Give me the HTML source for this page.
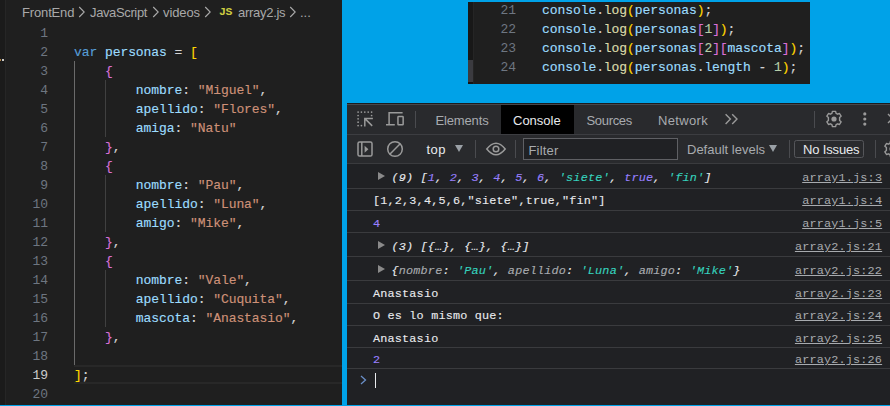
<!DOCTYPE html><html><head><meta charset="utf-8"><style>
*{margin:0;padding:0;box-sizing:border-box}
html,body{width:890px;height:406px;overflow:hidden;background:#00a2e8}
body{position:relative}
.a{position:absolute}
.mono{font-family:"Liberation Mono",monospace}
.sans{font-family:"Liberation Sans",sans-serif}
#ed{left:0;top:0;width:342px;height:405px;background:#1f1f1f;overflow:hidden}
.ln{position:absolute;left:0;width:48px;text-align:right;color:#6e7681;font-size:13px;line-height:19px;height:19px;white-space:pre}
.cl{position:absolute;-webkit-text-stroke:0.15px currentColor;font-size:13px;line-height:19px;height:19px;letter-spacing:-0.07px;white-space:pre;color:#d4d4d4}
.k{color:#569cd6}.v{color:#9cdcfe}.s{color:#ce9178}.b1{color:#ffd700}.b2{color:#da70d6}.b3{color:#179fff}.f{color:#dcdcaa}.n{color:#b5cea8}
.bc{position:absolute;font-size:13px;color:#a9a9a9;white-space:pre;line-height:16px}
#snip{left:468px;top:2px;width:342px;height:82px;background:#1f1f1f;overflow:hidden}
#dt{left:347px;top:103px;width:543px;height:302px;background:#202124;overflow:hidden}
.hl{position:absolute;left:0;width:543px;height:1px;background:#3a3b3e}
.ct{position:absolute;-webkit-text-stroke:0.12px currentColor;font-size:11.8px;letter-spacing:0.19px;line-height:14px;white-space:pre;color:#e8eaed}
.lnk{position:absolute;font-size:11.8px;letter-spacing:0.19px;line-height:14px;white-space:pre;color:#a8abaf;text-decoration:underline}
.num{color:#9980ff}.str{color:#36d3be}.prop{color:#a8abaf}
.tri{position:absolute;width:0;height:0;border-left:7px solid #8a8a8a;border-top:4.5px solid transparent;border-bottom:4.5px solid transparent}
.ui{position:absolute;font-size:13px;line-height:16px;white-space:pre;color:#a8abaf}
.sep{position:absolute;width:1px;background:#4a4b4f}
</style></head><body>
<div id="ed" class="a">
<div class="a" style="left:0;top:0;width:5px;height:405px;background:#1b1b1b"></div>
<div class="a" style="left:0;top:59px;width:1px;height:2px;background:#b08040"></div>
<div class="a" style="left:2px;top:59px;width:2px;height:2px;background:#c8c8c8"></div>
<div class="a" style="left:5px;top:0;width:1px;height:405px;background:#262626"></div>
<div class="bc sans" style="left:22px;top:4.6px;letter-spacing:-0.15px">FrontEnd</div>
<div class="bc sans" style="left:90px;top:4.6px;letter-spacing:-0.37px">JavaScript</div>
<div class="bc sans" style="left:163px;top:4.6px;letter-spacing:-0.1px">videos</div>
<div class="bc sans" style="left:238px;top:4.6px;letter-spacing:-0.28px">array2.js</div>
<div class="bc sans" style="left:300px;top:4.6px">...</div>
<svg class="a" style="left:78px;top:6px" width="8" height="12" viewBox="0 0 8 12"><path d="M1.2 1 L6.2 6 L1.2 11" fill="none" stroke="#a9a9a9" stroke-width="1.1"/></svg>
<svg class="a" style="left:152.3px;top:6px" width="8" height="12" viewBox="0 0 8 12"><path d="M1.2 1 L6.2 6 L1.2 11" fill="none" stroke="#a9a9a9" stroke-width="1.1"/></svg>
<svg class="a" style="left:204px;top:6px" width="8" height="12" viewBox="0 0 8 12"><path d="M1.2 1 L6.2 6 L1.2 11" fill="none" stroke="#a9a9a9" stroke-width="1.1"/></svg>
<svg class="a" style="left:289px;top:6px" width="8" height="12" viewBox="0 0 8 12"><path d="M1.2 1 L6.2 6 L1.2 11" fill="none" stroke="#a9a9a9" stroke-width="1.1"/></svg>
<div class="a mono" style="left:219px;top:5px;font-size:11.5px;font-weight:bold;color:#cbcb41;line-height:14px;letter-spacing:-0.5px">JS</div>
<div class="a" style="left:74px;top:365.4px;width:270px;height:19px;border-top:2px solid #282828;border-bottom:2px solid #282828"></div>
<div class="a" style="left:74px;top:61.4px;width:1px;height:304.0px;background:#6a6a6a"></div>
<div class="a" style="left:105px;top:80.4px;width:1px;height:57.0px;background:#404040"></div>
<div class="a" style="left:105px;top:175.4px;width:1px;height:57.0px;background:#404040"></div>
<div class="a" style="left:105px;top:270.4px;width:1px;height:57.0px;background:#404040"></div>
<div class="ln mono" style="top:24.3px;color:#6e7681">1</div>
<div class="ln mono" style="top:43.3px;color:#6e7681">2</div>
<div class="cl mono" style="left:74px;top:43.2px"><span class="k">var</span> <span class="v">personas</span> = <span class="b1">[</span></div>
<div class="ln mono" style="top:62.3px;color:#6e7681">3</div>
<div class="cl mono" style="left:74px;top:62.2px">    <span class="b2">{</span></div>
<div class="ln mono" style="top:81.3px;color:#6e7681">4</div>
<div class="cl mono" style="left:74px;top:81.2px">        <span class="v">nombre</span>: <span class="s">"Miguel"</span>,</div>
<div class="ln mono" style="top:100.3px;color:#6e7681">5</div>
<div class="cl mono" style="left:74px;top:100.2px">        <span class="v">apellido</span>: <span class="s">"Flores"</span>,</div>
<div class="ln mono" style="top:119.3px;color:#6e7681">6</div>
<div class="cl mono" style="left:74px;top:119.2px">        <span class="v">amiga</span>: <span class="s">"Natu"</span></div>
<div class="ln mono" style="top:138.3px;color:#6e7681">7</div>
<div class="cl mono" style="left:74px;top:138.2px">    <span class="b2">}</span>,</div>
<div class="ln mono" style="top:157.3px;color:#6e7681">8</div>
<div class="cl mono" style="left:74px;top:157.2px">    <span class="b2">{</span></div>
<div class="ln mono" style="top:176.3px;color:#6e7681">9</div>
<div class="cl mono" style="left:74px;top:176.2px">        <span class="v">nombre</span>: <span class="s">"Pau"</span>,</div>
<div class="ln mono" style="top:195.3px;color:#6e7681">10</div>
<div class="cl mono" style="left:74px;top:195.2px">        <span class="v">apellido</span>: <span class="s">"Luna"</span>,</div>
<div class="ln mono" style="top:214.3px;color:#6e7681">11</div>
<div class="cl mono" style="left:74px;top:214.2px">        <span class="v">amigo</span>: <span class="s">"Mike"</span>,</div>
<div class="ln mono" style="top:233.3px;color:#6e7681">12</div>
<div class="cl mono" style="left:74px;top:233.2px">    <span class="b2">}</span>,</div>
<div class="ln mono" style="top:252.3px;color:#6e7681">13</div>
<div class="cl mono" style="left:74px;top:252.2px">    <span class="b2">{</span></div>
<div class="ln mono" style="top:271.3px;color:#6e7681">14</div>
<div class="cl mono" style="left:74px;top:271.2px">        <span class="v">nombre</span>: <span class="s">"Vale"</span>,</div>
<div class="ln mono" style="top:290.3px;color:#6e7681">15</div>
<div class="cl mono" style="left:74px;top:290.2px">        <span class="v">apellido</span>: <span class="s">"Cuquita"</span>,</div>
<div class="ln mono" style="top:309.3px;color:#6e7681">16</div>
<div class="cl mono" style="left:74px;top:309.2px">        <span class="v">mascota</span>: <span class="s">"Anastasio"</span>,</div>
<div class="ln mono" style="top:328.3px;color:#6e7681">17</div>
<div class="cl mono" style="left:74px;top:328.2px">    <span class="b2">}</span>,</div>
<div class="ln mono" style="top:347.3px;color:#6e7681">18</div>
<div class="ln mono" style="top:366.3px;color:#cccccc">19</div>
<div class="cl mono" style="left:74px;top:366.2px"><span class="b1">]</span>;</div>
<div class="ln mono" style="top:385.3px;color:#6e7681">20</div>
</div>
<div id="snip" class="a">
<div class="a" style="left:0;top:0;width:5px;height:82px;background:#181818"></div>
<div class="a" style="left:0;top:58px;width:5px;height:22px;background:#3b3b40"></div>
<div class="a" style="left:0;top:80px;width:5px;height:2px;background:#141414"></div>
<div class="a" style="left:5px;top:0;width:1px;height:82px;background:#252525"></div>
<div class="ln mono" style="left:0;width:48px;top:-1.5px">21</div>
<div class="cl mono" style="left:74px;top:-1.5px"><span class="v">console</span>.<span class="f">log</span><span class="b1">(</span><span class="v">personas</span><span class="b1">)</span>;</div>
<div class="ln mono" style="left:0;width:48px;top:17.5px">22</div>
<div class="cl mono" style="left:74px;top:17.5px"><span class="v">console</span>.<span class="f">log</span><span class="b1">(</span><span class="v">personas</span><span class="b2">[</span><span class="n">1</span><span class="b2">]</span><span class="b1">)</span>;</div>
<div class="ln mono" style="left:0;width:48px;top:36.5px">23</div>
<div class="cl mono" style="left:74px;top:36.5px"><span class="v">console</span>.<span class="f">log</span><span class="b1">(</span><span class="v">personas</span><span class="b2">[</span><span class="n">2</span><span class="b2">][</span><span class="v">mascota</span><span class="b2">]</span><span class="b1">)</span>;</div>
<div class="ln mono" style="left:0;width:48px;top:55.5px">24</div>
<div class="cl mono" style="left:74px;top:55.5px"><span class="v">console</span>.<span class="f">log</span><span class="b1">(</span><span class="v">personas</span>.<span class="v">length</span> - <span class="n">1</span><span class="b1">)</span>;</div>
</div>
<div id="dt" class="a">
<div class="a" style="left:0;top:0;width:543px;height:31px;background:#292a2d"></div>
<div class="a" style="left:0;top:0;width:543px;height:1px;background:#1c1c1e"></div>
<div class="a" style="left:0;top:1px;width:543px;height:1px;background:#47484c"></div>
<div class="a" style="left:154px;top:2px;width:73px;height:29px;background:#000"></div>
<div class="a" style="left:0;top:31px;width:543px;height:1px;background:#3c3d41"></div>
<div class="a" style="left:0;top:32px;width:543px;height:28px;background:#292a2d"></div>
<div class="a" style="left:0;top:60px;width:543px;height:1px;background:#3c3d41"></div>
<div class="ui sans" style="left:88.5px;top:10.2px;letter-spacing:-0.15px">Elements</div>
<div class="ui sans" style="left:166px;top:10.2px;color:#e8eaed">Console</div>
<div class="ui sans" style="left:239.5px;top:10.2px;letter-spacing:-0.33px">Sources</div>
<div class="ui sans" style="left:311px;top:10.2px;letter-spacing:0.33px">Network</div>
<div class="sep" style="left:68px;top:8px;height:17px"></div>
<div class="sep" style="left:467px;top:8px;height:17px"></div>
<div class="sep" style="left:128px;top:37px;height:18px"></div>
<div class="sep" style="left:168px;top:37px;height:18px"></div>
<div class="sep" style="left:442px;top:37px;height:18px"></div>
<div class="sep" style="left:528px;top:37px;height:18px"></div>
<svg class="a" style="left:9px;top:7px" width="18" height="18" viewBox="0 0 18 18"><g fill="#9a9a9a"><circle cx="2.1" cy="2.1" r="0.85"/><circle cx="5.4" cy="2.1" r="0.85"/><circle cx="8.8" cy="2.1" r="0.85"/><circle cx="12.2" cy="2.1" r="0.85"/><circle cx="15.6" cy="2.1" r="0.85"/><circle cx="2.1" cy="5.5" r="0.85"/><circle cx="2.1" cy="8.8" r="0.85"/><circle cx="2.1" cy="12.2" r="0.85"/><circle cx="2.1" cy="15.6" r="0.85"/><circle cx="15.6" cy="5.5" r="0.85"/><circle cx="5.4" cy="15.6" r="0.85"/></g>
<path d="M8.8 16.6 V8.5 H16.9 M9.2 8.9 L16.2 15.9" fill="none" stroke="#9a9a9a" stroke-width="1.5"/></svg>
<svg class="a" style="left:38px;top:8px" width="20" height="18" viewBox="0 0 20 18">
<path d="M17.6 1.8 H4.1 V13.5 M1 13.7 H9.8" fill="none" stroke="#9a9a9a" stroke-width="1.5"/>
<rect x="12.95" y="5.55" width="5.2" height="8.3" rx="0.6" fill="none" stroke="#9a9a9a" stroke-width="1.5"/></svg>
<svg class="a" style="left:375.6px;top:9px" width="16" height="16" viewBox="0 0 16 16">
<path d="M2.6 2.2 L7.4 7.1 L2.6 12 M9.2 2.2 L14 7.1 L9.2 12" fill="none" stroke="#9a9a9a" stroke-width="1.4"/></svg>
<svg class="a" style="left:477px;top:6px" width="20" height="20" viewBox="-10 -10 20 20">
<path d="M-1.6 -7.6 L1.6 -7.6 L2.1 -5.6 L3.6 -4.8 L5.5 -5.5 L7.1 -2.8 L5.6 -1.4 L5.6 1.4 L7.1 2.8 L5.5 5.5 L3.6 4.8 L2.1 5.6 L1.6 7.6 L-1.6 7.6 L-2.1 5.6 L-3.6 4.8 L-5.5 5.5 L-7.1 2.8 L-5.6 1.4 L-5.6 -1.4 L-7.1 -2.8 L-5.5 -5.5 L-3.6 -4.8 L-2.1 -5.6 Z" fill="none" stroke="#9a9a9a" stroke-width="1.4" stroke-linejoin="round"/>
<circle cx="0" cy="0" r="2.6" fill="#9a9a9a"/></svg>
<svg class="a" style="left:513px;top:8px" width="10" height="20" viewBox="0 0 10 20">
<circle cx="4.8" cy="2.9" r="1.6" fill="#9a9a9a"/><circle cx="4.8" cy="8" r="1.6" fill="#9a9a9a"/><circle cx="4.8" cy="13.1" r="1.6" fill="#9a9a9a"/></svg>
<svg class="a" style="left:537.5px;top:8px" width="14" height="16" viewBox="0 0 14 16">
<path d="M3 3 L12 12 M12 3 L3 12" fill="none" stroke="#9a9a9a" stroke-width="1.4"/></svg>
<svg class="a" style="left:9px;top:37px" width="18" height="18" viewBox="0 0 18 18">
<rect x="2" y="2" width="14" height="14" rx="1.6" fill="none" stroke="#9a9a9a" stroke-width="1.5"/>
<path d="M5.8 2 V16" stroke="#9a9a9a" stroke-width="1.5"/>
<path d="M8.6 5.8 L12.4 9.3 L8.6 12.8 Z" fill="#9a9a9a"/></svg>
<svg class="a" style="left:37.8px;top:35.8px" width="20" height="20" viewBox="-10 -10 20 20">
<circle cx="0" cy="0" r="7.3" fill="none" stroke="#9a9a9a" stroke-width="1.5"/>
<path d="M5.2 -5.2 L-5.2 5.2" stroke="#9a9a9a" stroke-width="1.5"/></svg>
<svg class="a" style="left:137px;top:35.8px" width="24" height="20" viewBox="-12 -10 24 20">
<path d="M-9.2 0 Q0 -11.5 9.2 0 Q0 11.5 -9.2 0 Z" fill="none" stroke="#9a9a9a" stroke-width="1.5"/>
<circle cx="0" cy="0" r="2.8" fill="none" stroke="#9a9a9a" stroke-width="1.5"/></svg>
<svg class="a" style="left:535px;top:35.8px" width="20" height="20" viewBox="-10 -10 20 20">
<path d="M-1.6 -7.6 L1.6 -7.6 L2.1 -5.6 L3.6 -4.8 L5.5 -5.5 L7.1 -2.8 L5.6 -1.4 L5.6 1.4 L7.1 2.8 L5.5 5.5 L3.6 4.8 L2.1 5.6 L1.6 7.6 L-1.6 7.6 L-2.1 5.6 L-3.6 4.8 L-5.5 5.5 L-7.1 2.8 L-5.6 1.4 L-5.6 -1.4 L-7.1 -2.8 L-5.5 -5.5 L-3.6 -4.8 L-2.1 -5.6 Z" fill="none" stroke="#9a9a9a" stroke-width="1.4" stroke-linejoin="round"/>
<circle cx="0" cy="0" r="2.6" fill="#9a9a9a"/></svg>
<div class="ui sans" style="left:79.5px;top:39px;color:#e8eaed;letter-spacing:0.45px">top</div>
<div class="a" style="left:108px;top:42px;width:0;height:0;border-top:7px solid #9aa0a6;border-left:4.5px solid transparent;border-right:4.5px solid transparent"></div>
<div class="a" style="left:176px;top:35px;width:155px;height:22px;border:1px solid #5f6064;background:#202124"></div>
<div class="ui sans" style="left:181.5px;top:39.5px;letter-spacing:0.17px">Filter</div>
<div class="ui sans" style="left:340px;top:38.5px">Default levels</div>
<div class="a" style="left:422px;top:42px;width:0;height:0;border-top:7px solid #9aa0a6;border-left:4px solid transparent;border-right:4px solid transparent"></div>
<div class="a" style="left:447px;top:37px;width:69.5px;height:18px;border:1px solid #55565a;border-radius:2.5px"></div>
<div class="ui sans" style="left:456px;top:39px;color:#e8eaed;letter-spacing:-0.15px">No Issues</div>
<div class="hl" style="top:60px;background:#3a3b3e"></div>
<div class="hl" style="top:85px;background:#3a3b3e"></div>
<div class="hl" style="top:107px;background:#3a3b3e"></div>
<div class="hl" style="top:129px;background:#3a3b3e"></div>
<div class="hl" style="top:153px;background:#3a3b3e"></div>
<div class="hl" style="top:177px;background:#3a3b3e"></div>
<div class="hl" style="top:200px;background:#3a3b3e"></div>
<div class="hl" style="top:222px;background:#3a3b3e"></div>
<div class="hl" style="top:244px;background:#3a3b3e"></div>
<div class="hl" style="top:265px;background:#3a3b3e"></div>
<div class="tri" style="left:31px;top:69px"></div>
<div class="ct mono" style="left:44.5px;top:68.1px"><span style="font-style:italic">(9) [<span class="num">1</span>, <span class="num">2</span>, <span class="num">3</span>, <span class="num">4</span>, <span class="num">5</span>, <span class="num">6</span>, <span class="str">'siete'</span>, <span class="num">true</span>, <span class="str">'fin'</span>]</span></div>
<div class="lnk mono" style="left:455.2px;top:68.1px">array1.js:3</div>
<div class="ct mono" style="left:26px;top:91.1px">[1,2,3,4,5,6,"siete",true,"fin"]</div>
<div class="lnk mono" style="left:455.2px;top:91.1px">array1.js:4</div>
<div class="ct mono" style="left:26px;top:113.7px"><span class="num">4</span></div>
<div class="lnk mono" style="left:455.2px;top:113.7px">array1.js:5</div>
<div class="tri" style="left:31px;top:138px"></div>
<div class="ct mono" style="left:44.5px;top:137.4px"><span style="font-style:italic">(3) [{…}, {…}, {…}]</span></div>
<div class="lnk mono" style="left:447.9px;top:137.4px">array2.js:21</div>
<div class="tri" style="left:31px;top:162px"></div>
<div class="ct mono" style="left:44.5px;top:160.8px"><span style="font-style:italic">{<span class="prop">nombre</span>: <span class="str">'Pau'</span>, <span class="prop">apellido</span>: <span class="str">'Luna'</span>, <span class="prop">amigo</span>: <span class="str">'Mike'</span>}</span></div>
<div class="lnk mono" style="left:447.9px;top:160.8px">array2.js:22</div>
<div class="ct mono" style="left:26px;top:183.7px">Anastasio</div>
<div class="lnk mono" style="left:447.9px;top:183.7px">array2.js:23</div>
<div class="ct mono" style="left:26px;top:206.1px">O es lo mismo que:</div>
<div class="lnk mono" style="left:447.9px;top:206.1px">array2.js:24</div>
<div class="ct mono" style="left:26px;top:228.5px">Anastasio</div>
<div class="lnk mono" style="left:447.9px;top:228.5px">array2.js:25</div>
<div class="ct mono" style="left:26px;top:250.2px"><span class="num">2</span></div>
<div class="lnk mono" style="left:447.9px;top:250.2px">array2.js:26</div>
<svg class="a" style="left:13px;top:272px" width="7" height="10" viewBox="0 0 7 10"><path d="M1 1 L5.5 5 L1 9" fill="none" stroke="#6a8fc8" stroke-width="1.3"/></svg>
<div class="a" style="left:28px;top:270px;width:1px;height:15px;background:#e8eaed"></div>
</div>
</body></html>
